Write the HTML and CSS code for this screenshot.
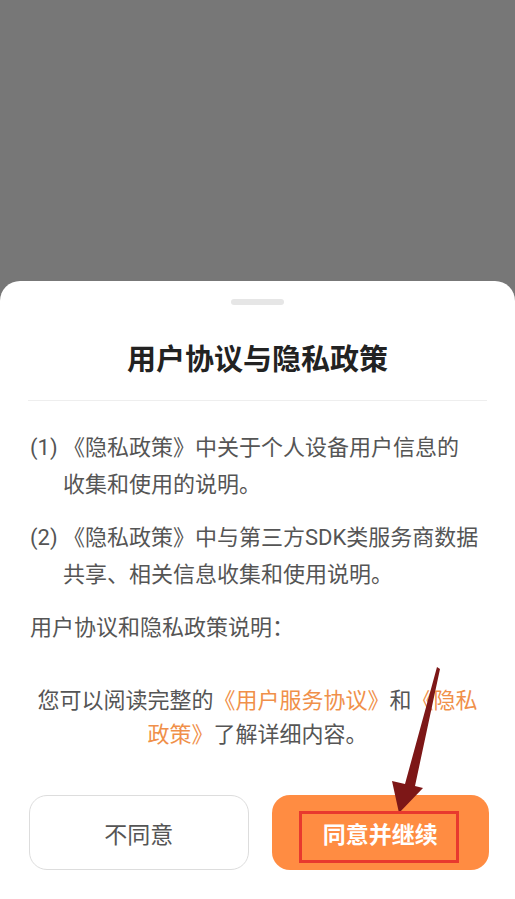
FILE: index.html
```html
<!DOCTYPE html>
<html lang="zh-CN">
<head>
  <meta charset="UTF-8" />
  <meta name="viewport" content="width=device-width, initial-scale=1.0" />
  <title>用户协议与隐私政策</title>
  <link rel="stylesheet" href="styles.css">
</head>
<body>
  <div class="backdrop"></div>

  <div class="sheet">
    <div class="handle"></div>
    <h2 class="title">用户协议与隐私政策</h2>
    <div class="divider"></div>

    <div class="content">
      <p class="item">(1) 《隐私政策》中关于个人设备用户信息的<br>收集和使用的说明。</p>
      <p class="item">(2) 《隐私政策》中与第三方SDK类服务商数据<br>共享、相关信息收集和使用说明。</p>
      <p class="label">用户协议和隐私政策说明：</p>
      <p class="notice">您可以阅读完整的<a href="#">《用户服务协议》</a>和<a href="#">《隐私<br>政策》</a>了解详细内容。</p>
    </div>

    <div class="actions">
      <button class="btn btn-decline">不同意</button>
      <button class="btn btn-accept">同意并继续</button>
    </div>
  </div>

  <!-- annotation drawn over the screenshot -->
  <svg class="annotation" width="515" height="899" viewBox="0 0 515 899">
    <polygon points="437,667 440,669 415,786 423,788 399,813 392,781 405,784" fill="#7d1717" />
    <rect x="300.5" y="812.5" width="157" height="49" fill="none" stroke="#e8392e" stroke-width="3" />
  </svg>
</body>
</html>
```

FILE: styles.css
```css
* { box-sizing: border-box; }
html, body { margin: 0; padding: 0; }
body {
  width: 515px;
  height: 899px;
  display: flex;
  flex-direction: column;
  background-color: #777777;
  font-family: Roboto, "Noto Sans CJK SC", sans-serif;
  position: relative;
  overflow: hidden;
}
.backdrop { flex: 1; }

/* Bottom sheet */
.sheet {
  height: 618px;
  background-color: #fff;
  border-radius: 20px 20px 0 0;
  display: flex;
  flex-direction: column;
}
.handle {
  width: 53px;
  height: 6px;
  margin: 18px auto 0;
  background-color: #e6e6e6;
  border-radius: 3px;
}
.title {
  margin: 35px 0 0;
  font-size: 29px;
  line-height: 40px;
  font-weight: bold;
  text-align: center;
  color: #222;
}
.divider {
  height: 1px;
  margin: 20px 28px 0;
  background-color: #eeeeee;
}

/* Body text */
.content {
  padding: 28px 30px 0;
  color: #555;
  font-size: 22px;
}
.content p { margin: 0; }
.item {
  line-height: 37px;
  padding-left: 33px;
  text-indent: -33px;
  margin-bottom: 16px !important;
}
.label { line-height: 37px; }
.notice {
  margin-top: 38px !important;
  line-height: 34px;
  text-align: center;
}
.notice a {
  color: #f0904a;
  text-decoration: none;
}

/* Buttons */
.actions {
  display: flex;
  gap: 23px;
  padding: 43px 26px 0 29px;
}
.btn {
  flex: 1 1 0;
  min-width: 0;
  height: 75px;
  border-radius: 18px;
  font-family: inherit;
  font-size: 23px;
  cursor: pointer;
}
.btn-decline {
  background-color: #fff;
  border: 1px solid #dddddd;
  color: #555;
}
.btn-accept {
  background-color: #ff8c42;
  border: none;
  color: #fff;
  font-weight: bold;
}

.annotation {
  position: absolute;
  top: 0;
  left: 0;
  pointer-events: none;
}
```
